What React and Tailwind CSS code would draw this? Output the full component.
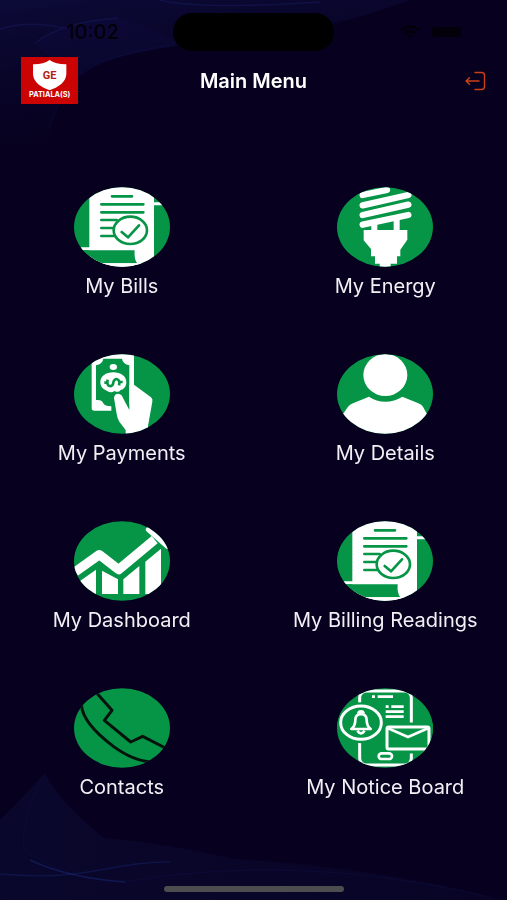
import { useId } from "react";

const GREEN = "#069547";

function Disc({ children }) {
    const id = useId();
    return (
        <svg viewBox="0 0 288 240" className="h-20 w-24" aria-hidden="true">
            <clipPath id={id}>
                <ellipse cx="144" cy="120" rx="144" ry="119" />
            </clipPath>
            <g clipPath={`url(#${id})`}>
                <rect width="288" height="240" fill={GREEN} />
                {children}
            </g>
        </svg>
    );
}

function BillIcon() {
    return (
        <Disc>
            <path d="M46 0H240V240H46Z" fill="#fff" />
            <path d="M240 50H288M20 185H186" stroke="#fff" strokeWidth="9" />
            <path d="M0 190H182Q180 218 190 229H0Z" fill={GREEN} />
            <path d="M40 229H200V240H40Z" fill="#fff" />
            <path
                d="M114 28H174M82 52H208M82 76H208M82 99H128M82 123H120M82 147H124"
                stroke={GREEN}
                strokeWidth="8"
                strokeLinecap="round"
            />
            <ellipse cx="169" cy="130" rx="50" ry="41" fill="#fff" stroke={GREEN} strokeWidth="8" />
            <path
                d="M143 135L162 151L195 115"
                fill="none"
                stroke={GREEN}
                strokeWidth="8"
                strokeLinecap="round"
                strokeLinejoin="round"
            />
        </Disc>
    );
}

function BulbIcon() {
    return (
        <Disc>
            <path
                d="M77 24L150 9M77 55L214 24M77 84L214 53M77 113L214 84"
                stroke="#fff"
                strokeWidth="19"
                strokeLinecap="round"
            />
            <path d="M103 108H121V132H103ZM170 92H188V132H170Z" fill="#fff" />
            <path
                d="M80 129H211V158L190 188V208H180V230H161V240H128V230H114V208H102V186L80 160Z"
                fill="#fff"
            />
        </Disc>
    );
}

function PaymentIcon() {
    return (
        <Disc>
            <path d="M53 0H180V170H61Q53 170 53 162Z" fill="#fff" />
            <path
                d="M88 14H144Q146 30 166 34V157H112Q92 157 88 148Q84 136 66 138V34Q86 30 88 14Z"
                fill={GREEN}
            />
            <path d="M112 150H180V175H112Z" fill={GREEN} />
            <ellipse cx="118" cy="39" rx="11" ry="9" fill="#fff" />
            <path
                d="M79 85C79 66 96 55 118 55S157 66 157 85C157 98 149 106 139 109Q134 117 121 111Q112 119 98 110C87 106 79 98 79 85Z"
                fill="#fff"
            />
            <path
                d="M91 86H101M101 77C95 101 117 101 118 86C120 70 141 72 135 94M135 84H146"
                fill="none"
                stroke={GREEN}
                strokeWidth="8"
            />
            <path
                d="M120 132Q121 119 133 119Q143 120 147 132L166 168V92H180L231 130Q237 135 235 143L222 216V240H155V228L136 203Q130 194 128 180Z"
                fill="#fff"
            />
        </Disc>
    );
}

function PersonIcon() {
    return (
        <Disc>
            <ellipse cx="145" cy="63" rx="66" ry="63" fill="#fff" />
            <path
                d="M0 240V195L20 177L33 158Q38 152 48 148L96 128Q118 143 145 143T196 128L244 148Q254 152 258 158L268 177L288 195V240Z"
                fill="#fff"
            />
        </Disc>
    );
}

function ChartIcon() {
    return (
        <Disc>
            <path
                d="M4 152L76 101L134 146L242 56"
                fill="none"
                stroke="#fff"
                strokeWidth="28"
                strokeLinejoin="round"
            />
            <path d="M223 26L280 76" stroke="#fff" strokeWidth="15" strokeLinecap="round" />
            <path
                d="M18 180L66 146V218H18ZM84 149L132 175V219H84ZM148 175L196 135V219H148ZM214 122L261 83V219H214Z"
                fill="#fff"
            />
        </Disc>
    );
}

function PhoneIcon() {
    return (
        <Disc>
            <path
                d="M62 8L114 67L91 97L170 162L206 145L280 183M22 50Q26 106 118 175Q180 220 232 221"
                fill="none"
                stroke="#04140c"
                strokeWidth="9"
                strokeLinejoin="round"
            />
        </Disc>
    );
}

function NoticeIcon() {
    return (
        <Disc>
            <g fill="none" stroke="#fff" strokeWidth="9" strokeLinejoin="round">
                <rect x="68" y="9" width="155" height="222" rx="20" />
                <ellipse cx="72" cy="104" rx="68" ry="57" fill={GREEN} stroke={GREEN} />
                <rect x="144" y="108" width="140" height="84" fill={GREEN} stroke={GREEN} />
                <ellipse cx="72" cy="104" rx="61" ry="50" />
                <path
                    d="M43 123Q55 114 55 96Q55 79 72 78Q89 79 89 96Q89 114 101 123Z M64 77Q65 70 72 70T80 77M61 128Q72 144 83 128"
                    strokeWidth="8"
                />
                <rect x="150" y="117" width="126" height="66" rx="5" />
                <path d="M153 121L213 147L273 121" strokeWidth="8" />
                <rect x="125" y="196" width="40" height="17" rx="9" strokeWidth="8" />
                <path
                    d="M105 26H114M122 26H168M146 56H155M163 56H200M146 71H200M146 86H200"
                    strokeWidth="8"
                />
            </g>
        </Disc>
    );
}

function Logo() {
    return (
        <svg viewBox="0 0 171 141" className="h-[47px] w-[57px]" role="img" aria-label="GE Patiala(S)">
            <rect width="171" height="141" fill="#cb0303" />
            <path
                d="M86 9Q107 23 136 22V52C135 76 111 92 86 100C61 92 37 76 36 52V22Q65 23 86 9Z"
                fill="#fff"
            />
            <text
                x="86"
                y="67"
                textAnchor="middle"
                fill="#b51a14"
                className="font-['Roboto',sans-serif] text-[33px] font-bold"
            >
                GE
            </text>
            <text
                x="86"
                y="119"
                textAnchor="middle"
                fill="#fff"
                className="font-['Inter',sans-serif] text-[22px] font-bold"
            >
                PATIALA(S)
            </text>
        </svg>
    );
}

function LogoutIcon() {
    return (
        <svg
            viewBox="0 0 21 20"
            className="h-5 w-[21px]"
            fill="none"
            stroke="#cc4016"
            strokeWidth="1.4"
            strokeLinecap="round"
            strokeLinejoin="round"
            aria-hidden="true"
        >
            <path d="M10 1.5H16.5Q19.5 1.5 19.5 4.5V15.5Q19.5 18.5 16.5 18.5H10M14 10H1M4.5 6.8L1 10L4.5 13.2" />
        </svg>
    );
}

function Waves() {
    return (
        <div className="pointer-events-none absolute inset-0 -z-10 flex flex-col justify-between overflow-hidden">
            <svg viewBox="0 0 507 200" preserveAspectRatio="none" className="h-[200px] w-full" aria-hidden="true">
                <defs>
                    <linearGradient id="topGlow" x1="0" y1="0" x2="0.2" y2="0.7">
                        <stop offset="0" stopColor="#0e0e42" stopOpacity="0.7" />
                        <stop offset="1" stopColor="#0b0b38" stopOpacity="0" />
                    </linearGradient>
                </defs>
                <path d="M0 0H410Q330 30 250 37Q120 50 85 70Q60 90 48 140L0 200Z" fill="url(#topGlow)" />
                <path d="M35 43Q62 22 118 18Q180 36 175 45Q110 55 80 76Q60 70 35 43Z" fill="#14145a" opacity="0.15" />
                <g fill="none" stroke="#1a2168" strokeWidth="1.5" opacity="0.4">
                    <path d="M0 29Q28 20 64 28" />
                    <path d="M35 43Q62 22 118 18" />
                    <path d="M160 0Q200 10 320 2" />
                    <path d="M175 45Q100 55 82 74Q62 90 48 130" opacity="0.4" />
                </g>
            </svg>
            <svg viewBox="0 0 507 140" preserveAspectRatio="none" className="h-[140px] w-full" aria-hidden="true">
                <defs>
                    <linearGradient id="bottomGlow" x1="0" y1="0" x2="1" y2="0">
                        <stop offset="0" stopColor="#0e1040" stopOpacity="0.4" />
                        <stop offset="1" stopColor="#0e1040" stopOpacity="0.2" />
                    </linearGradient>
                </defs>
                <path
                    d="M45 13Q62 45 104 78Q170 84 235 99Q380 108 490 137L507 140H0V60Q30 30 45 13Z"
                    fill="url(#bottomGlow)"
                />
                <g fill="none" stroke="#1f3186" strokeWidth="1.5">
                    <path d="M0 114Q55 119 100 110T170 102" opacity="0.3" />
                    <path d="M30 100Q68 118 125 122" opacity="0.4" />
                    <path d="M45 13Q20 60 24 90Q60 112 70 113" opacity="0.08" />
                    <path d="M125 122Q300 92 490 137" opacity="0.1" />
                </g>
            </svg>
        </div>
    );
}

function StatusBar() {
    return (
        <div className="grid grid-cols-[1fr_161px_1fr] items-center pt-[13px]">
            <span className="pl-3 text-center text-[20px] leading-6 font-medium text-[#020109]">10:02</span>
            <div className="h-[38px] rounded-full bg-black" />
            <div className="flex items-center justify-center gap-3 pl-5">
                <svg viewBox="0 0 20 14" className="h-3.5 w-5" fill="none" stroke="#020109" strokeWidth="2.5" aria-hidden="true">
                    <path d="M1 5Q10 -2 19 5M4.5 8.5Q10 4 15.5 8.5" />
                    <path d="M7 11Q10 8.5 13 11L10 13.5Z" fill="#020109" stroke="none" />
                </svg>
                <div className="h-2.5 w-[29px] rounded-[3px] bg-[#020109]" />
            </div>
        </div>
    );
}

const menuItems = [
    { label: "My Bills", Icon: BillIcon },
    { label: "My Energy", Icon: BulbIcon },
    { label: "My Payments", Icon: PaymentIcon },
    { label: "My Details", Icon: PersonIcon },
    { label: "My Dashboard", Icon: ChartIcon },
    { label: "My Billing Readings", Icon: BillIcon },
    { label: "Contacts", Icon: PhoneIcon },
    { label: "My Notice Board", Icon: NoticeIcon },
];

export default function App() {
    return (
        <div className="relative isolate flex min-h-screen flex-col bg-[#07011f] font-['Inter',sans-serif] text-white">
            <Waves />
            <StatusBar />
            <header className="mt-1.5 grid grid-cols-[1fr_auto_1fr] items-center px-[21px]">
                <Logo />
                <h1 className="text-[20px] leading-6 font-semibold">Main Menu</h1>
                <button type="button" aria-label="Log out" className="justify-self-end">
                    <LogoutIcon />
                </button>
            </header>

            <main className="grid grid-cols-2 gap-x-5 gap-y-[53px] pt-[83px] pb-10">
                {menuItems.map(({ label, Icon }) => (
                    <button
                        key={label}
                        type="button"
                        className="flex flex-col items-center gap-1 text-[20px] leading-[30px] text-[#f1f0f5]"
                    >
                        <Icon />
                        {label}
                    </button>
                ))}
            </main>

            <div className="mx-auto mt-auto mb-2 h-1.5 w-[180px] rounded-full bg-[#4d4d4f]" />
        </div>
    );
}
